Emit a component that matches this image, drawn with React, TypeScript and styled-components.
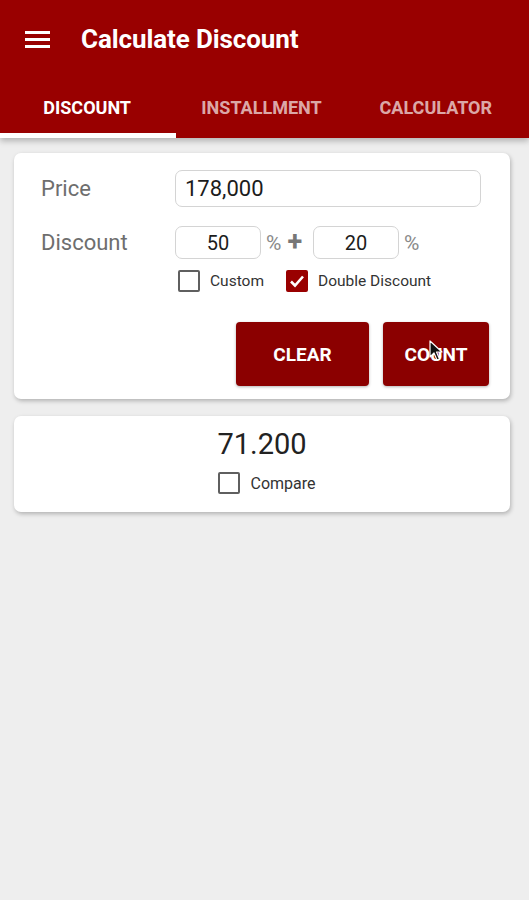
import React from "react";
import styled, { createGlobalStyle } from "styled-components";

const GlobalStyle = createGlobalStyle`
  html, body {
    margin: 0;
    padding: 0;
    background: #eeeeee;
    font-family: Roboto, "Noto Sans", Arial, sans-serif;
  }
  * { box-sizing: border-box; }
`;

const Page = styled.div`
  width: 529px;
  min-height: 900px;
  background: #eeeeee;
`;

const AppBar = styled.header`
  background: #990000;
  color: #fff;
  box-shadow: 0 3px 6px rgba(0, 0, 0, 0.25);
  position: relative;
  z-index: 1;
`;

const Toolbar = styled.div`
  height: 82px;
  display: flex;
  align-items: center;
  padding: 0 0 4px 25px;
  gap: 31px;
`;

const Title = styled.h1`
  margin: 0;
  font-size: 26px;
  font-weight: 700;
  letter-spacing: -0.1px;
`;

const Tabs = styled.nav`
  display: grid;
  grid-template-columns: repeat(3, 1fr);
  height: 56px;
  padding-right: 6px;
`;

const Tab = styled.div<{ $active?: boolean }>`
  position: relative;
  display: flex;
  align-items: center;
  justify-content: center;
  padding-bottom: 6px;
  font-size: 18px;
  font-weight: 700;
  color: ${(p) => (p.$active ? "#ffffff" : "rgba(255,255,255,0.68)")};
  &::after {
    content: "";
    position: absolute;
    left: 0;
    right: ${(p) => (p.$active ? "-2px" : "0")};
    bottom: 0;
    height: 5px;
    background: ${(p) => (p.$active ? "#ffffff" : "transparent")};
  }
`;

const Content = styled.main`
  padding: 15px 19px 0 14px;
  display: flex;
  flex-direction: column;
  gap: 17px;
`;

const Card = styled.section`
  background: #fff;
  border-radius: 7px;
  box-shadow: 1px 2px 4px rgba(0, 0, 0, 0.25);
`;

const FormCard = styled(Card)`
  padding: 17px 21px 13px 27px;
  display: flex;
  flex-direction: column;
`;

const Row = styled.div`
  display: grid;
  grid-template-columns: 134px 1fr;
  align-items: center;
`;

const Label = styled.span`
  font-size: 22px;
  color: #6e6e6e;
`;

const TextInput = styled.div<{ $width?: number; $center?: boolean }>`
  height: ${(p) => (p.$center ? 33 : 37)}px;
  width: ${(p) => (p.$width ? `${p.$width}px` : "306px")};
  border: 1.5px solid #d4d4d4;
  border-radius: 7px;
  display: flex;
  align-items: center;
  justify-content: ${(p) => (p.$center ? "center" : "flex-start")};
  padding: 0 ${(p) => (p.$center ? 0 : 9)}px;
  font-size: ${(p) => (p.$center ? 20 : 22)}px;
  color: #1c1c1c;
`;

const DiscountRow = styled(Row)`
  margin-top: 19px;
`;

const InlineGroup = styled.div`
  display: flex;
  align-items: center;
`;

const Unit = styled.span`
  font-size: 21px;
  color: #8a8a8a;
  margin: 0 4px 0 5px;
`;

const Plus = styled.span`
  font-size: 27px;
  font-weight: 700;
  color: #777;
  margin: 0 11px 0 2px;
  line-height: 1;
`;

const CheckRow = styled.div`
  display: flex;
  align-items: center;
  margin: 11px 0 0 137px;
  gap: 22px;
`;

const CheckItem = styled.label`
  display: flex;
  align-items: center;
  gap: 10px;
  font-size: 15.5px;
  color: #333;
`;

const Box = styled.span<{ $checked?: boolean }>`
  width: 22px;
  height: 22px;
  border-radius: 2px;
  border: 2px solid ${(p) => (p.$checked ? "#990000" : "#5f5f5f")};
  background: ${(p) => (p.$checked ? "#990000" : "#fff")};
  display: flex;
  align-items: center;
  justify-content: center;
`;

const Buttons = styled.div`
  display: flex;
  justify-content: flex-end;
  gap: 14px;
  margin-top: 30px;
`;

const Button = styled.button<{ $width: number }>`
  position: relative;
  width: ${(p) => p.$width}px;
  height: 64px;
  background: #8b0000;
  color: #fff;
  border: none;
  border-radius: 4px;
  font-family: Roboto, Arial, sans-serif;
  font-size: 19px;
  font-weight: 700;
  box-shadow: 0 1px 3px rgba(0, 0, 0, 0.3);
  padding: 0;
`;

const Cursor = styled.svg`
  position: absolute;
  left: 46px;
  top: 18px;
`;

const ResultCard = styled(Card)`
  height: 96px;
  display: flex;
  flex-direction: column;
  align-items: center;
  padding-top: 11px;
`;

const Value = styled.div`
  font-size: 29px;
  color: #222;
  line-height: 34px;
`;

const CompareItem = styled(CheckItem)`
  margin-top: 11px;
  font-size: 16px;
  margin-left: 10px;
`;

const Check = () => (
  <svg width="16" height="14" viewBox="0 0 16 14">
    <path d="M2 7.5 L6 11.5 L14 2.5" fill="none" stroke="#fff" strokeWidth="2.6" />
  </svg>
);

const Hamburger = () => (
  <svg width="25" height="17" viewBox="0 0 25 17">
    <rect x="0" y="0" width="25" height="3" fill="#fff" />
    <rect x="0" y="7" width="25" height="3" fill="#fff" />
    <rect x="0" y="14" width="25" height="3" fill="#fff" />
  </svg>
);

export default function App() {
  return (
    <Page>
      <GlobalStyle />
      <AppBar>
        <Toolbar>
          <Hamburger />
          <Title>Calculate Discount</Title>
        </Toolbar>
        <Tabs>
          <Tab $active>DISCOUNT</Tab>
          <Tab>INSTALLMENT</Tab>
          <Tab>CALCULATOR</Tab>
        </Tabs>
      </AppBar>
      <Content>
        <FormCard>
          <Row>
            <Label>Price</Label>
            <TextInput>178,000</TextInput>
          </Row>
          <DiscountRow>
            <Label>Discount</Label>
            <InlineGroup>
              <TextInput $center $width={86}>50</TextInput>
              <Unit>%</Unit>
              <Plus>+</Plus>
              <TextInput $center $width={86}>20</TextInput>
              <Unit>%</Unit>
            </InlineGroup>
          </DiscountRow>
          <CheckRow>
            <CheckItem>
              <Box />
              Custom
            </CheckItem>
            <CheckItem>
              <Box $checked>
                <Check />
              </Box>
              Double Discount
            </CheckItem>
          </CheckRow>
          <Buttons>
            <Button $width={133}>CLEAR</Button>
            <Button $width={106}>
              COUNT
              <Cursor width="14" height="22" viewBox="0 0 14 22">
                <path
                  d="M1 1 L1 17 L5 13 L8 20 L10.5 19 L7.5 12 L13 12 Z"
                  fill="#111"
                  stroke="#fff"
                  strokeWidth="1.2"
                  strokeLinejoin="round"
                />
              </Cursor>
            </Button>
          </Buttons>
        </FormCard>
        <ResultCard>
          <Value>71.200</Value>
          <CompareItem>
            <Box />
            Compare
          </CompareItem>
        </ResultCard>
      </Content>
    </Page>
  );
}
